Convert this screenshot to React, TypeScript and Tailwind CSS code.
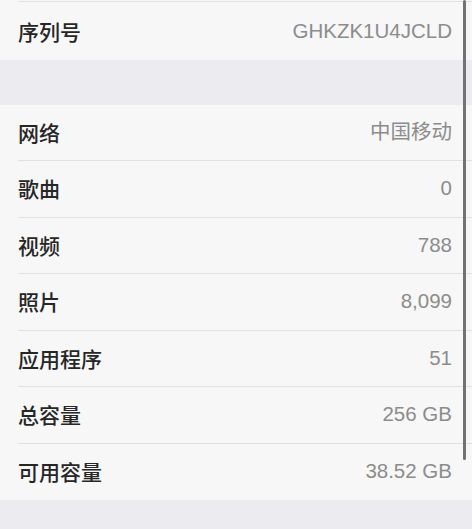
const rows: [string, string][] = [
  ["网络", "中国移动"],
  ["歌曲", "0"],
  ["视频", "788"],
  ["照片", "8,099"],
  ["应用程序", "51"],
  ["总容量", "256 GB"],
  ["可用容量", "38.52 GB"],
];

function Row({ label, value, last }: { label: string; value: string; last?: boolean }) {
  return (
    <div className="pl-[18px] bg-[#f7f7f7]">
      <div
        className={
          "h-[56.5px] flex items-center justify-between pr-[20px] " +
          (last ? "" : "border-b border-[#e1e1e3]")
        }
      >
        <span className="text-[21px] text-[#262626] font-medium">{label}</span>
        <span className="text-[20.5px] text-[#8c8c8c] font-['Liberation_Sans','Noto_Sans_CJK_SC',sans-serif]">
          {value}
        </span>
      </div>
    </div>
  );
}

export default function App() {
  return (
    <div className="relative w-[472px] h-[529px] overflow-hidden bg-[#ebebf0] font-['Noto_Sans_CJK_SC',sans-serif]">
      <div className="bg-[#f7f7f7] pl-[18px]">
        <div className="h-[2px] border-b border-[#e1e1e3]" />
      </div>
      <div className="pt-[1px] bg-[#f7f7f7]">
        <Row label="序列号" value="GHKZK1U4JCLD" last />
      </div>
      <div className="h-[45px]" />
      {rows.map(([l, v], i) => (
        <Row key={l} label={l} value={v} last={i === rows.length - 1} />
      ))}

      {/* scroll indicator */}
      <div className="absolute left-[463px] top-0 w-[3px] h-[460px] rounded-full bg-[#727272]" />
    </div>
  );
}
